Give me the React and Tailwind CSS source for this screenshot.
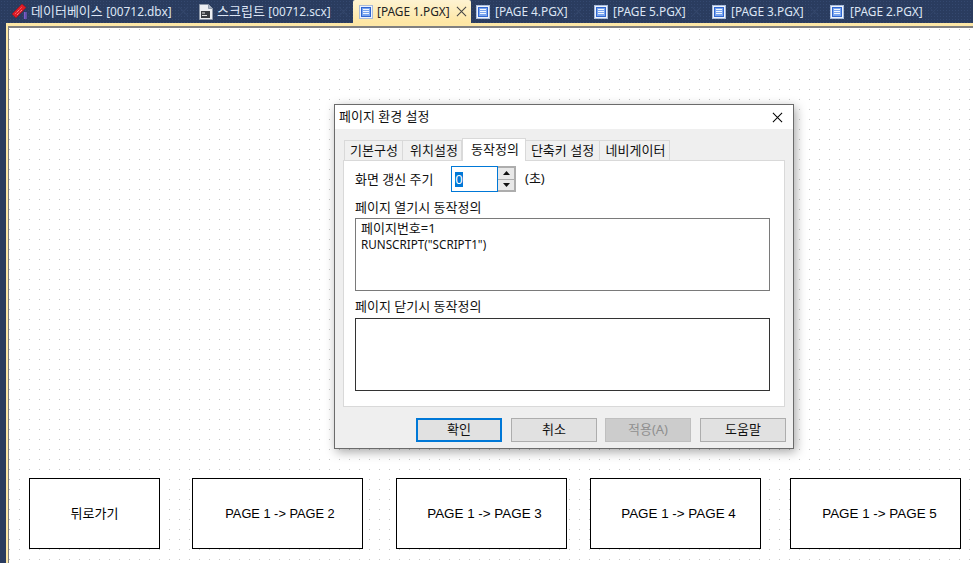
import React from 'react';

const uiFont = "font-['Noto_Sans','Noto_Sans_CJK_KR',sans-serif]";
const btnFont = "font-['Liberation_Sans','Noto_Sans_CJK_KR',sans-serif]";

const CloseX = ({ size, cls }) => (
  <svg width={size} height={size} viewBox="0 0 12 12" className={cls}>
    <path d="M1 1l10 10M11 1 1 11" stroke="currentColor" strokeWidth="1.1" fill="none" />
  </svg>
);

const PageIcon = () => (
  <svg width="14" height="14" viewBox="0 0 14 14" className="shrink-0">
    <rect x="0.5" y="0.5" width="13" height="13" fill="#eef3fb" stroke="#a9bbd9" />
    <rect x="2" y="2" width="10" height="10" fill="#2f66d2" />
    <rect x="3" y="3" width="8" height="8" fill="#7aa5ee" />
    <path d="M4 4.500h6M4 6.500h6M4 8.500h6" stroke="#f1f6ff" strokeWidth="1" />
  </svg>
);

const DbIcon = () => (
  <svg width="15" height="15" viewBox="0 0 15 15" className="shrink-0">
    <path d="M12.500 8v7M14 8v7" stroke="#7d5ccc" strokeWidth="1.2" />
    <path d="M0 10 10 0l4 3.500L4 14z" fill="#e01c26" stroke="#9c0f16" strokeWidth="0.5" />
    <path d="M3.500 9.500l6-6M5 11l5.500-5.500" stroke="#ffc2c2" strokeWidth="0.9" strokeDasharray="1 1" />
  </svg>
);

const ScriptIcon = () => (
  <svg width="14" height="16" viewBox="0 0 14 16" className="shrink-0">
    <path d="M0.500 0.500h9l4 4v11h-13z" fill="#eceef2" stroke="#8d97a8" />
    <path d="M9.500 0.500v4h4" fill="#aab3c2" stroke="#8d97a8" />
    <rect x="2" y="7" width="9" height="7" fill="#3a3d42" />
    <path d="M3 9h3M3 11.500h5" stroke="#e6e6e6" strokeWidth="1" />
  </svg>
);

const tabs = [
  { icon: <DbIcon />, ko: '데이터베이스 ', text: '[00712.dbx]', w: 'w-[187px]', gap: 'gap-[4px]', pl: 'pl-[6px]' },
  { icon: <ScriptIcon />, ko: '스크립트 ', text: '[00712.scx]', w: 'w-[160px]', gap: 'gap-[4px]', pl: 'pl-[6px]' },
  { icon: <PageIcon />, text: '[PAGE 1.PGX]', w: 'w-[118px]', gap: 'gap-[4px]', pl: 'pl-[6px]', active: true },
  { icon: <PageIcon />, text: '[PAGE 4.PGX]', w: 'w-[117px]', gap: 'gap-[5px]', pl: 'pl-[5px]' },
  { icon: <PageIcon />, text: '[PAGE 5.PGX]', w: 'w-[118px]', gap: 'gap-[5px]', pl: 'pl-[6px]' },
  { icon: <PageIcon />, text: '[PAGE 3.PGX]', w: 'w-[118px]', gap: 'gap-[5px]', pl: 'pl-[6px]' },
  { icon: <PageIcon />, text: '[PAGE 2.PGX]', w: 'w-[118px]', gap: 'gap-[6px]', pl: 'pl-[6px]' },
];

const EditorTab = ({ icon, ko, text, w, gap, pl, active }) => (
  <div
    className={`${w} ${gap} ${pl} h-[23px] flex items-center shrink-0 rounded-t-[2px] ${
      active ? 'bg-gradient-to-b from-[#fdf3d2] to-[#fee6a2] text-[#222222]' : 'text-[#dde6f5]'
    }`}
  >
    {icon}
    <span className="whitespace-nowrap text-[11.85px]">
      {ko && <span className="text-[13px]">{ko}</span>}
      {text}
    </span>
    <CloseX size={11} cls={`ml-auto mr-[4px] ${active ? 'text-[#444444]' : 'text-[#34476b]'}`} />
  </div>
);

const DialogTab = ({ label, w, active, cls = '' }) => (
  <div
    className={`${w} ${cls} flex items-center justify-center border border-[#d9d9d9] ${
      active ? 'h-[23px] bg-white border-b-0 -mb-[1px] relative' : 'h-[20px] bg-[#f0f0f0] border-b-0 -ml-[1px]'
    }`}
  >
    {label}
  </div>
);

const DialogButton = ({ label, cls, ml }) => (
  <div className={`w-[86px] h-[24px] flex items-center justify-center ${ml} ${cls}`}>{label}</div>
);

const CanvasButton = ({ label, w, ml, cls }) => (
  <div className={`${w} ${ml} h-[71px] pt-[1px] border border-black bg-white flex items-center justify-center shrink-0 text-black ${btnFont} ${cls}`}>
    {label}
  </div>
);

export default function App() {
  return (
    <div className={`w-[973px] h-[563px] overflow-hidden bg-[#2a3c5f] flex flex-col text-[13px] ${uiFont}`}>
      <div className="flex items-start h-[23px] pl-[6px] shrink-0 bg-[radial-gradient(#34486f_0.8px,transparent_0.8px)] bg-[size:3px_3px]">
        {tabs.map((t) => (
          <EditorTab key={t.text} {...t} />
        ))}
      </div>
      <div className="flex-1 flex min-h-0 pl-[6px]">
        <div className="flex-1 bg-[#fde7a6] pl-[2px] pt-[3px] flex">
          <div className="flex-1 bg-[#7f7f7f] pl-[1px] pt-[2px] flex">
            <div className="flex-1 relative bg-white bg-[radial-gradient(circle_at_0.5px_0.5px,#c4c4c4_0.7px,transparent_0.7px)] bg-[size:10px_10px] bg-[position:0px_1px] flex items-end pb-[14px]">
              <CanvasButton label="뒤로가기" w="w-[131px]" ml="ml-[20px]" cls="" />
              <CanvasButton label="PAGE 1 -> PAGE 2" w="w-[171px]" ml="ml-[32px]" cls="text-[12.8px] pl-[5px]" />
              <CanvasButton label="PAGE 1 -> PAGE 3" w="w-[171px]" ml="ml-[33px]" cls="text-[13.4px] pl-[6px]" />
              <CanvasButton label="PAGE 1 -> PAGE 4" w="w-[171px]" ml="ml-[23px]" cls="text-[13.4px] pl-[6px]" />
              <CanvasButton label="PAGE 1 -> PAGE 5" w="w-[171px]" ml="ml-[29px]" cls="text-[13.4px] pl-[8px]" />

              {/* dialog floats over the canvas */}
              <div className="absolute left-[325px] top-[76px] w-[460px] h-[345px] border border-[#6b6b6b] bg-[#efefef] shadow-[2px_3px_10px_rgba(0,0,0,0.35)] text-[#111111] flex flex-col">
                <div className="h-[24px] bg-white flex items-center justify-between pl-[4px] pr-[10px] shrink-0">
                  <span>페이지 환경 설정</span>
                  <CloseX size={11} cls="text-black" />
                </div>
                <div className="flex items-end h-[31px] pl-[10px] shrink-0">
                  <DialogTab label="기본구성" w="w-[59px]" cls="pl-[1px]" />
                  <DialogTab label="위치설정" w="w-[60px]" cls="pl-[4px]" />
                  <DialogTab label="동작정의" w="w-[64px]" active cls="pl-[2px]" />
                  <DialogTab label="단축키 설정" w="w-[75px]" />
                  <DialogTab label="네비게이터" w="w-[71px]" cls="pl-[2px]" />
                </div>
                <div className="mx-[8px] h-[247px] border border-[#d9d9d9] bg-white px-[11px] flex flex-col shrink-0">
                  <div className="flex items-center h-[26px] mt-[5px]">
                    <span className="w-[96px] pt-[1px]">화면 갱신 주기</span>
                    <div className="w-[47px] h-[26px] border border-[#0078d7] bg-white flex items-center pl-[3px]">
                      <span className="bg-[#0078d7] text-white w-[8px] text-center text-[13px] leading-[15px]">0</span>
                    </div>
                    <div className="w-[18px] h-[26px] border-2 border-[#adadad] border-l-0 flex flex-col items-stretch">
                      <div className="flex-1 bg-[#e8e8e8] border-b border-[#adadad] flex items-center justify-center">
                        <svg width="7" height="4" viewBox="0 0 7 4"><path d="M3.500 0 7 4H0z" fill="#111" /></svg>
                      </div>
                      <div className="flex-1 bg-[#e8e8e8] flex items-center justify-center">
                        <svg width="7" height="4" viewBox="0 0 7 4"><path d="M0 0h7L3.500 4z" fill="#111" /></svg>
                      </div>
                    </div>
                    <span className="ml-[9px]">(초)</span>
                  </div>
                  <div className="mt-[6px] h-[18px] leading-[18px]">페이지 열기시 동작정의</div>
                  <div className="mt-[2px] w-[415px] h-[73px] border border-[#7a7a7a] px-[5px] pt-[1px] leading-[16px]">
                    <div>페이지번호=1</div>
                    <div className="text-[11.7px]">RUNSCRIPT("SCRIPT1")</div>
                  </div>
                  <div className="mt-[6px] h-[18px] leading-[18px]">페이지 닫기시 동작정의</div>
                  <div className="mt-[3px] w-[415px] h-[73px] border border-[#333333]" />
                </div>
                <div className="flex pt-[11px] pl-[81px]">
                  <DialogButton label="확인" ml="" cls="bg-[#e1e1e1] border-2 border-[#0078d7]" />
                  <DialogButton label="취소" ml="ml-[9px]" cls="bg-[#e1e1e1] border border-[#adadad]" />
                  <DialogButton label="적용(A)" ml="ml-[8px]" cls="bg-[#cccccc] border border-[#bfbfbf] text-[#8f8f8f]" />
                  <DialogButton label="도움말" ml="ml-[9px]" cls="bg-[#e1e1e1] border border-[#adadad]" />
                </div>
              </div>
            </div>
          </div>
        </div>
      </div>
    </div>
  );
}
